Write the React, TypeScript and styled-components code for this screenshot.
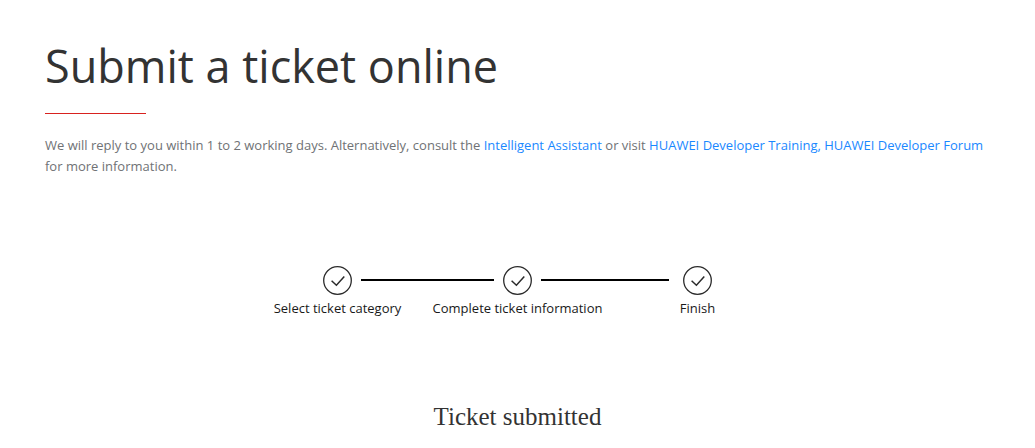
import React from "react";
import styled, { createGlobalStyle } from "styled-components";

const GlobalStyle = createGlobalStyle`
  * { box-sizing: border-box; }
  body {
    margin: 0;
    background: #fff;
    color: #333;
    font-family: "Segoe UI", "Open Sans", "Noto Sans", sans-serif;
  }
`;

const Page = styled.main`
  padding: 32px 45px 16px;
`;

const Title = styled.h1`
  margin: 0;
  font-size: 45px;
  line-height: 68px;
  font-weight: 400;
`;

const Rule = styled.div`
  width: 101px;
  height: 1px;
  margin-top: 13px;
  background: #d8221f;
`;

const Intro = styled.p`
  margin: 21px 0 0;
  font-size: 13px;
  line-height: 21px;
  color: #6f7275;
`;

const Link = styled.a`
  color: #1a88ff;
  text-decoration: none;
`;

const Steps = styled.ol`
  display: grid;
  grid-template-columns: repeat(3, 180px);
  justify-content: center;
  margin: 89px 0 0;
  padding: 0;
  list-style: none;
`;

const Step = styled.li`
  text-align: center;
`;

const Track = styled.div`
  display: flex;
  align-items: flex-start;
  gap: 9px;
`;

const Line = styled.span<{ $hidden?: boolean; $short?: boolean }>`
  flex: 1;
  margin-top: 13px;

  &::before {
    content: "";
    display: block;
    height: 2px;
    margin-right: ${(p) => (p.$short ? "5px" : "0")};
    background: ${(p) => (p.$hidden ? "transparent" : "#000")};
  }
`;

const StepLabel = styled.div`
  font-size: 13px;
  line-height: 20px;
  margin-top: 3px;
  color: #191919;
`;

const Result = styled.h2`
  margin: 83px 0 0;
  font-family: "Liberation Serif", "Times New Roman", serif;
  font-size: 25px;
  line-height: 32px;
  font-weight: 400;
  text-align: center;
`;

const CheckMark = () => (
  <svg width="29" height="29" viewBox="0 0 29 29" fill="none" stroke="#2b2b2b" aria-hidden="true">
    <circle cx="14.5" cy="14.5" r="13.8" strokeWidth="1.3" />
    <path d="M8.6 14.8 13.4 19.2 21.3 10.6" strokeWidth="1.5" />
  </svg>
);

const steps = ["Select ticket category", "Complete ticket information", "Finish"];

export default function App() {
  const last = steps.length - 1;
  return (
    <>
      <GlobalStyle />
      <Page>
        <Title>Submit a ticket online</Title>
        <Rule />
        <Intro>
          We will reply to you within 1 to 2 working days. Alternatively, consult the{" "}
          <Link href="#assistant">Intelligent Assistant</Link> or visit{" "}
          <Link href="#training">HUAWEI Developer Training,</Link>{" "}
          <Link href="#forum">HUAWEI Developer Forum</Link> for more information.
        </Intro>
        <Steps>
          {steps.map((label, i) => (
            <Step key={label}>
              <Track>
                <Line $hidden={i === 0} $short={i === last} />
                <CheckMark />
                <Line $hidden={i === last} />
              </Track>
              <StepLabel>{label}</StepLabel>
            </Step>
          ))}
        </Steps>
        <Result>Ticket submitted</Result>
      </Page>
    </>
  );
}
